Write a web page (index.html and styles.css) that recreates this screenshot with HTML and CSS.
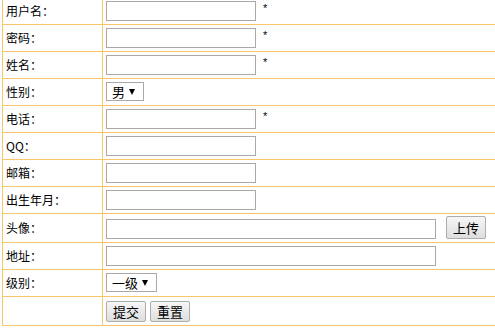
FILE: index.html
```html
<!DOCTYPE html>
<html>
<head>
    <title>用户注册</title>
    <link rel="stylesheet" href="styles.css">
</head>
<body>
    <form>
        <table class="regTable">
            <tr>
                <td class="label">用户名：</td>
                <td><input type="text" class="field"><span class="star">*</span></td>
            </tr>
            <tr>
                <td class="label">密码：</td>
                <td><input type="password" class="field"><span class="star">*</span></td>
            </tr>
            <tr>
                <td class="label">姓名：</td>
                <td><input type="text" class="field"><span class="star">*</span></td>
            </tr>
            <tr>
                <td class="label">性别：</td>
                <td>
                    <span class="selectBox">
                        <select class="sel selSex">
                            <option>男</option>
                            <option>女</option>
                        </select>
                    </span>
                </td>
            </tr>
            <tr>
                <td class="label">电话：</td>
                <td><input type="text" class="field"><span class="star">*</span></td>
            </tr>
            <tr>
                <td class="label">QQ：</td>
                <td><input type="text" class="field"></td>
            </tr>
            <tr>
                <td class="label">邮箱：</td>
                <td><input type="text" class="field"></td>
            </tr>
            <tr>
                <td class="label">出生年月：</td>
                <td><input type="text" class="field"></td>
            </tr>
            <tr class="uploadRow">
                <td class="label">头像：</td>
                <td><input type="text" class="field wide"><button type="button" class="btn upload">上传</button></td>
            </tr>
            <tr>
                <td class="label">地址：</td>
                <td><input type="text" class="field wide"></td>
            </tr>
            <tr class="levelRow">
                <td class="label">级别：</td>
                <td>
                    <span class="selectBox">
                        <select class="sel selLevel">
                            <option>一级</option>
                            <option>二级</option>
                            <option>三级</option>
                        </select>
                    </span>
                </td>
            </tr>
            <tr class="btnRow">
                <td class="label"></td>
                <td><button type="submit" class="btn">提交</button><button type="reset" class="btn">重置</button></td>
            </tr>
        </table>
    </form>
</body>
</html>
```

FILE: styles.css
```css
html, body {
    margin: 0;
    overflow: hidden;
    background: white;
}
body {
    font-family: "Noto Sans CJK SC", "Liberation Sans", sans-serif;
    font-size: 12px;
    color: #000;
}
.regTable {
    border-collapse: collapse;
    width: 560px;
    margin: -3px 0 0 2px;
    table-layout: fixed;
}
.regTable td {
    border: 1px solid #fbc66a;
    padding: 3px;
    height: 20px;
    line-height: 20px;
    vertical-align: middle;
    white-space: nowrap;
}
.regTable td.label {
    width: 93px;
    padding-left: 3px;
}
.uploadRow td {
    height: 22px;
}
.levelRow td {
    height: 19px;
}
.btnRow td {
    height: 21px;
    padding-top: 4px;
    padding-bottom: 3px;
}
.field {
    box-sizing: border-box;
    width: 150px;
    height: 20px;
    margin: 0;
    border: 1px solid #a9a9a9;
    padding: 1px 2px;
    vertical-align: top;
    font-family: "Noto Sans CJK SC", sans-serif;
    font-size: 13px;
}
.field.wide {
    width: 330px;
}
.uploadRow .field {
    margin-top: 2px;
}
.star {
    margin-left: 7px;
    font-family: "Liberation Sans", sans-serif;
    font-size: 11px;
    line-height: 14px;
    vertical-align: top;
}
.selectBox {
    position: relative;
    display: inline-block;
    height: 19px;
    vertical-align: top;
}
.selectBox::after {
    content: "";
    position: absolute;
    right: 9px;
    top: 7px;
    border-left: 3px solid transparent;
    border-right: 3px solid transparent;
    border-top: 6px solid #000;
    pointer-events: none;
}
.sel {
    -webkit-appearance: none;
    appearance: none;
    display: block;
    box-sizing: border-box;
    height: 19px;
    margin: 0;
    border: 1px solid #a9a9a9;
    border-radius: 0;
    background: white;
    padding: 0 0 0 5px;
    font-family: "Noto Sans CJK SC", sans-serif;
    font-size: 13px;
    line-height: 17px;
    color: #000;
}
.selSex {
    width: 38px;
}
.selLevel {
    width: 51px;
}
.btn {
    box-sizing: border-box;
    height: 21px;
    padding: 0 6px;
    margin: 0 4px 0 0;
    border: 1px solid #adadad;
    border-radius: 2px;
    background: linear-gradient(to bottom, #f6f6f6, #dedede);
    font-family: "Noto Sans CJK SC", sans-serif;
    font-size: 13px;
    line-height: 18px;
    color: #000;
    vertical-align: top;
}
.btn.upload {
    height: 23px;
    margin-left: 10px;
    margin-top: -1px;
}
```
